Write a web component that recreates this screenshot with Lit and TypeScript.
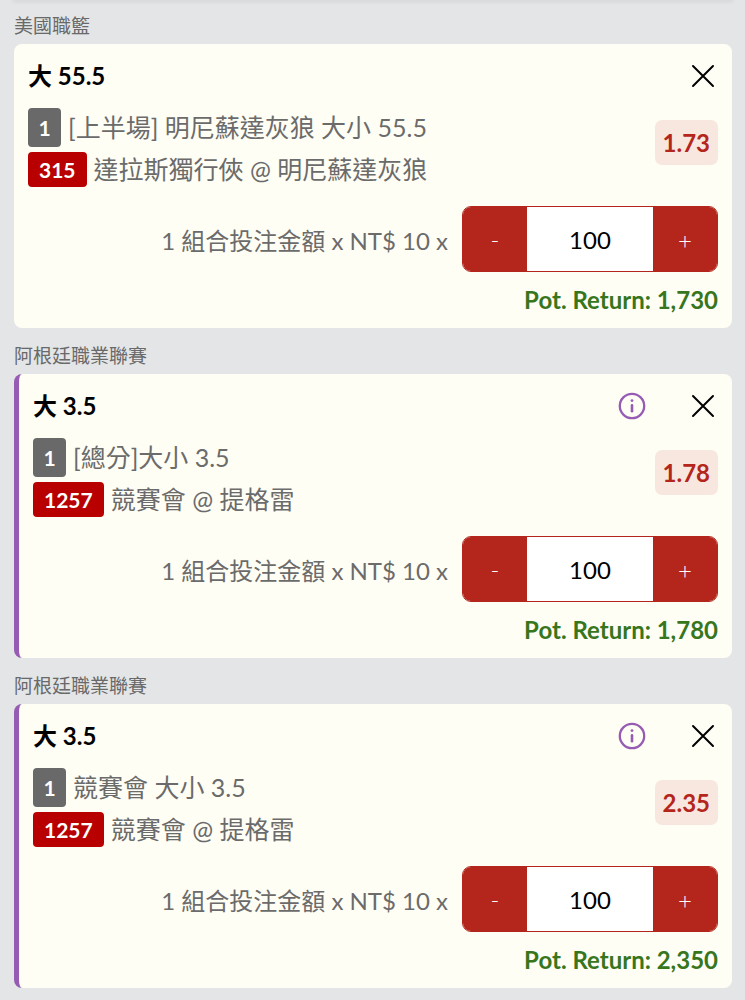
import { LitElement, html, css, svg, nothing } from "lit";
import { customElement, property, state } from "lit/decorators.js";

interface Bet {
  league: string;
  title: string;
  order: string;
  market: string;
  eventNo: string;
  match: string;
  odds: number;
  live: boolean;
}

const UNIT = 10;

const BETS: Bet[] = [
  {
    league: "美國職籃",
    title: "大 55.5",
    order: "1",
    market: "[上半場] 明尼蘇達灰狼 大小 55.5",
    eventNo: "315",
    match: "達拉斯獨行俠 @ 明尼蘇達灰狼",
    odds: 1.73,
    live: false,
  },
  {
    league: "阿根廷職業聯賽",
    title: "大 3.5",
    order: "1",
    market: "[總分]大小 3.5",
    eventNo: "1257",
    match: "競賽會 @ 提格雷",
    odds: 1.78,
    live: true,
  },
  {
    league: "阿根廷職業聯賽",
    title: "大 3.5",
    order: "1",
    market: "競賽會 大小 3.5",
    eventNo: "1257",
    match: "競賽會 @ 提格雷",
    odds: 2.35,
    live: true,
  },
];

const closeIcon = svg`<path d="M5 5 L25 25 M25 5 L5 25" fill="none" stroke="#000" stroke-width="2" stroke-linecap="round"/>`;
const infoIcon = svg`<circle cx="14" cy="14" r="12.2" fill="none" stroke="#965cb4" stroke-width="2.3"/>
  <circle cx="14" cy="8.6" r="1.4" fill="#965cb4"/>
  <path d="M14 13.4 V19.2" stroke="#965cb4" stroke-width="2.6" stroke-linecap="round"/>`;

@customElement("bet-card")
export class BetCard extends LitElement {
  @property({ attribute: false }) bet!: Bet;
  @state() private stake = 100;

  static styles = css`
    :host {
      display: block;
    }
    * {
      box-sizing: border-box;
    }
    .league {
      margin: 0 0 5px;
      font-size: 19px;
      line-height: 27px;
      font-weight: 400;
      color: #696969;
    }
    .card {
      padding: 15px 14px 10px;
      border-radius: 8px;
      background: #fffef5;
    }
    .card.live {
      border-left: 5px solid #965cb4;
    }
    .head {
      display: flex;
      align-items: center;
      height: 34px;
      gap: 42px;
    }
    .title {
      flex: 1;
      margin: 0;
      font-size: 24px;
      line-height: 34px;
      font-weight: 700;
      color: #000;
    }
    button {
      font: inherit;
      border: 0;
      padding: 0;
      cursor: pointer;
    }
    .icon {
      display: flex;
      background: none;
    }
    .body {
      display: flex;
      justify-content: space-between;
      align-items: flex-start;
      margin-top: 15px;
    }
    .picks {
      display: flex;
      flex-direction: column;
      gap: 5px;
      font-size: 25px;
      color: #6b6b6b;
    }
    .pick {
      display: flex;
      align-items: center;
      gap: 7px;
      line-height: 35px;
    }
    .tag {
      min-width: 33px;
      padding: 0 11px;
      border-radius: 4px;
      font-size: 21px;
      line-height: 35px;
      font-weight: 700;
      text-align: center;
      color: #fff;
      background: #b80000;
    }
    .tag.order {
      line-height: 39px;
      padding: 0 10px;
      background: #696969;
    }
    .odds {
      margin-top: 12px;
      padding: 0 8px;
      border-radius: 7px;
      font-size: 24px;
      line-height: 45px;
      font-weight: 700;
      color: #b4261c;
      background: #f8e7df;
    }
    .stake {
      display: flex;
      justify-content: flex-end;
      align-items: center;
      gap: 14px;
      margin-top: 19px;
      font-size: 24px;
      color: #6b6b6b;
    }
    .stepper {
      display: flex;
      width: 256px;
      height: 66px;
      border: 1px solid #b4261c;
      border-radius: 9px;
      overflow: hidden;
    }
    .step {
      width: 64px;
      background: #b4261c;
      color: #fff;
      font-weight: 300;
    }
    .amount {
      flex: 1;
      min-width: 0;
      border: 0;
      padding: 0;
      font: inherit;
      text-align: center;
      color: #000;
      background: #fff;
    }
    .return {
      margin: 10px 0 0;
      font-size: 24px;
      line-height: 36px;
      font-weight: 700;
      text-align: right;
      color: #37761d;
    }
  `;

  private change(delta: number) {
    this.stake = Math.max(0, this.stake + delta);
  }

  render() {
    const b = this.bet;
    const payout = Math.round(this.stake * UNIT * b.odds).toLocaleString("en-US");
    return html`
      <h2 class="league">${b.league}</h2>
      <article class="card ${b.live ? "live" : ""}">
        <header class="head">
          <h3 class="title">${b.title}</h3>
          ${b.live
            ? html`<button class="icon" aria-label="Info">
                <svg width="28" height="28" viewBox="0 0 28 28">${infoIcon}</svg>
              </button>`
            : nothing}
          <button class="icon" aria-label="Remove">
            <svg width="30" height="30" viewBox="0 0 30 30">${closeIcon}</svg>
          </button>
        </header>
        <div class="body">
          <div class="picks">
            <div class="pick"><span class="tag order">${b.order}</span><span>${b.market}</span></div>
            <div class="pick"><span class="tag">${b.eventNo}</span><span>${b.match}</span></div>
          </div>
          <span class="odds">${b.odds.toFixed(2)}</span>
        </div>
        <div class="stake">
          <label for="amount">1 組合投注金額 x NT$ ${UNIT} x</label>
          <div class="stepper">
            <button class="step" @click=${() => this.change(-10)}>-</button>
            <input
              class="amount"
              id="amount"
              inputmode="numeric"
              .value=${String(this.stake)}
              @input=${(e: Event) => (this.stake = Number((e.target as HTMLInputElement).value) || 0)}
            />
            <button class="step" @click=${() => this.change(10)}>+</button>
          </div>
        </div>
        <p class="return">Pot. Return: ${payout}</p>
      </article>
    `;
  }
}

@customElement("app-root")
export class AppRoot extends LitElement {
  static styles = css`
    :host {
      display: block;
      box-sizing: border-box;
      min-height: 100vh;
      padding: 0 13px 12px 14px;
      overflow: hidden;
      font-family: Lato, "Noto Sans CJK TC", sans-serif;
      background: #e4e5e7;
    }
    .edge {
      height: 0;
      box-shadow: 0 0 4px 1px rgba(0, 0, 0, 0.14);
    }
    .slip {
      display: flex;
      flex-direction: column;
      gap: 14px;
      padding-top: 12px;
    }
  `;

  render() {
    return html`
      <div class="edge"></div>
      <main class="slip">${BETS.map((bet) => html`<bet-card .bet=${bet}></bet-card>`)}</main>
    `;
  }
}
